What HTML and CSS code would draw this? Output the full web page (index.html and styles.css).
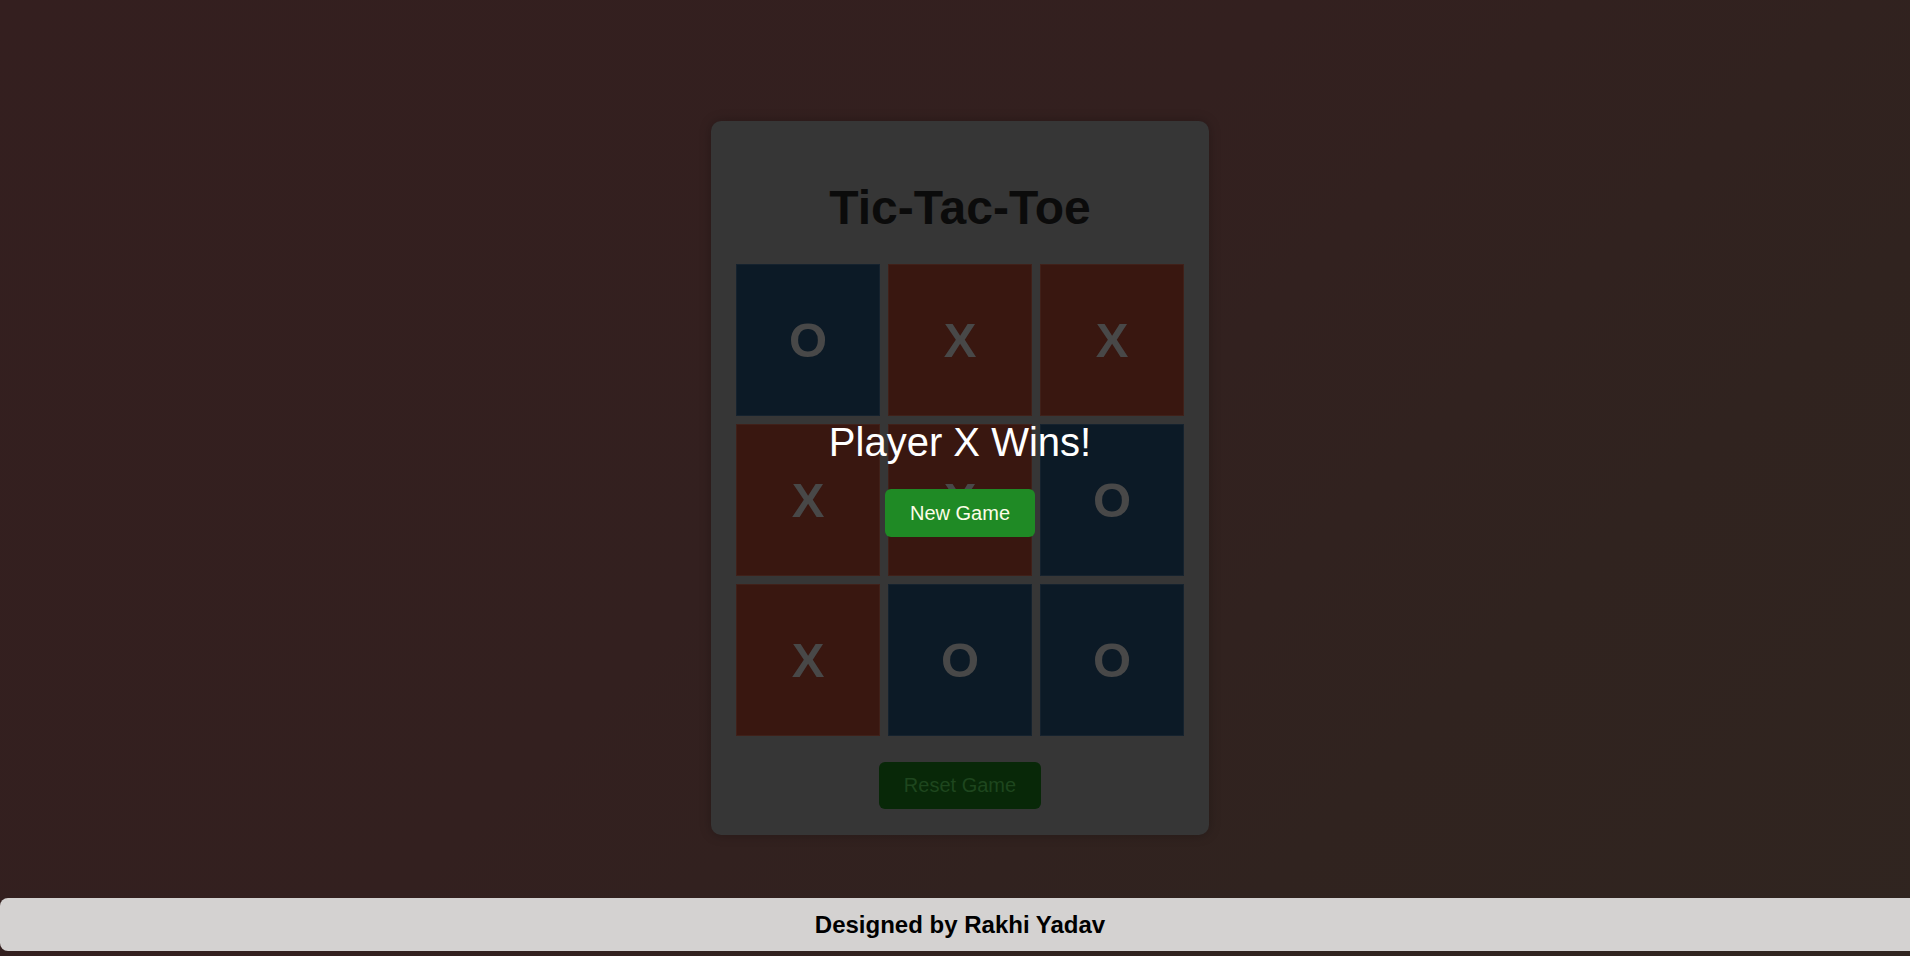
FILE: index.html
```html
<!DOCTYPE html>
<html lang="en">
<head>
<meta charset="UTF-8">
<title>Tic-Tac-Toe</title>
<link rel="stylesheet" href="styles.css">
</head>
<body>
  <main class="page">
    <section class="card">
      <h1 class="title">Tic-Tac-Toe</h1>
      <div class="board">
        <div class="cell cell-o">O</div>
        <div class="cell cell-x">X</div>
        <div class="cell cell-x">X</div>
        <div class="cell cell-x">X</div>
        <div class="cell cell-x">X</div>
        <div class="cell cell-o">O</div>
        <div class="cell cell-x">X</div>
        <div class="cell cell-o">O</div>
        <div class="cell cell-o">O</div>
      </div>
      <button class="reset-btn">Reset Game</button>
    </section>
  </main>

  <div class="overlay">
    <h2 class="result">Player X Wins!</h2>
    <button class="new-btn">New Game</button>
  </div>

  <footer class="footer">Designed by Rakhi Yadav</footer>
</body>
</html>
```

FILE: styles.css
```css
* {
  box-sizing: border-box;
}

html, body {
  margin: 0;
  padding: 0;
}

html {
  overflow: hidden;
  background: #33201f;
}

body {
  position: relative;
  width: 1920px;
  height: 100vh;
  font-family: "Liberation Sans", Arial, sans-serif;
  background: linear-gradient(135deg, #341f1f 0%, #33201f 45%, #30231f 75%, #302520 100%);
}

.page {
  height: 100vh;
  display: flex;
  align-items: center;
  justify-content: center;
}

.card {
  width: 498px;
  background: #363636;
  border-radius: 10px;
  padding: 26px 25px 26px;
  display: flex;
  flex-direction: column;
  align-items: center;
  box-shadow: 0 0 12px rgba(0, 0, 0, 0.25);
}

.title {
  margin: 33px 0 29px;
  font-size: 48px;
  font-weight: bold;
  color: #0b0b0b;
  line-height: 55px;
}

.board {
  display: grid;
  grid-template-columns: repeat(3, 144px);
  grid-template-rows: repeat(3, 152px);
  gap: 8px;
}

.cell {
  display: flex;
  align-items: center;
  justify-content: center;
  font-size: 49px;
  font-weight: bold;
  color: #484848;
  border: 1px solid rgba(255, 255, 255, 0.04);
}

.cell-o {
  background: #0c1a26;
}

.cell-x {
  background: #391710;
}

.reset-btn {
  margin-top: 26px;
  font-family: "Liberation Sans", Arial, sans-serif;
  font-size: 20px;
  line-height: 23px;
  padding: 12px 25px;
  border: none;
  border-radius: 6px;
  background: #082808;
  color: #1e461e;
}

.overlay {
  position: absolute;
  inset: 0;
  display: flex;
  flex-direction: column;
  align-items: center;
  justify-content: center;
  z-index: 5;
}

.result {
  margin: 0 0 24px;
  font-size: 40px;
  font-weight: normal;
  line-height: 46px;
  color: #ffffff;
}

.new-btn {
  font-family: "Liberation Sans", Arial, sans-serif;
  font-size: 20px;
  line-height: 24px;
  padding: 12px 25px;
  border: none;
  border-radius: 6px;
  background: #1f8a25;
  color: #fdfde8;
}

.footer {
  position: absolute;
  left: 0;
  right: 0;
  bottom: 5px;
  z-index: 10;
  background: #d4d2d1;
  border-radius: 8px;
  padding: 13px 0;
  text-align: center;
  font-size: 24px;
  line-height: 27px;
  font-weight: bold;
  color: #000000;
}
```
